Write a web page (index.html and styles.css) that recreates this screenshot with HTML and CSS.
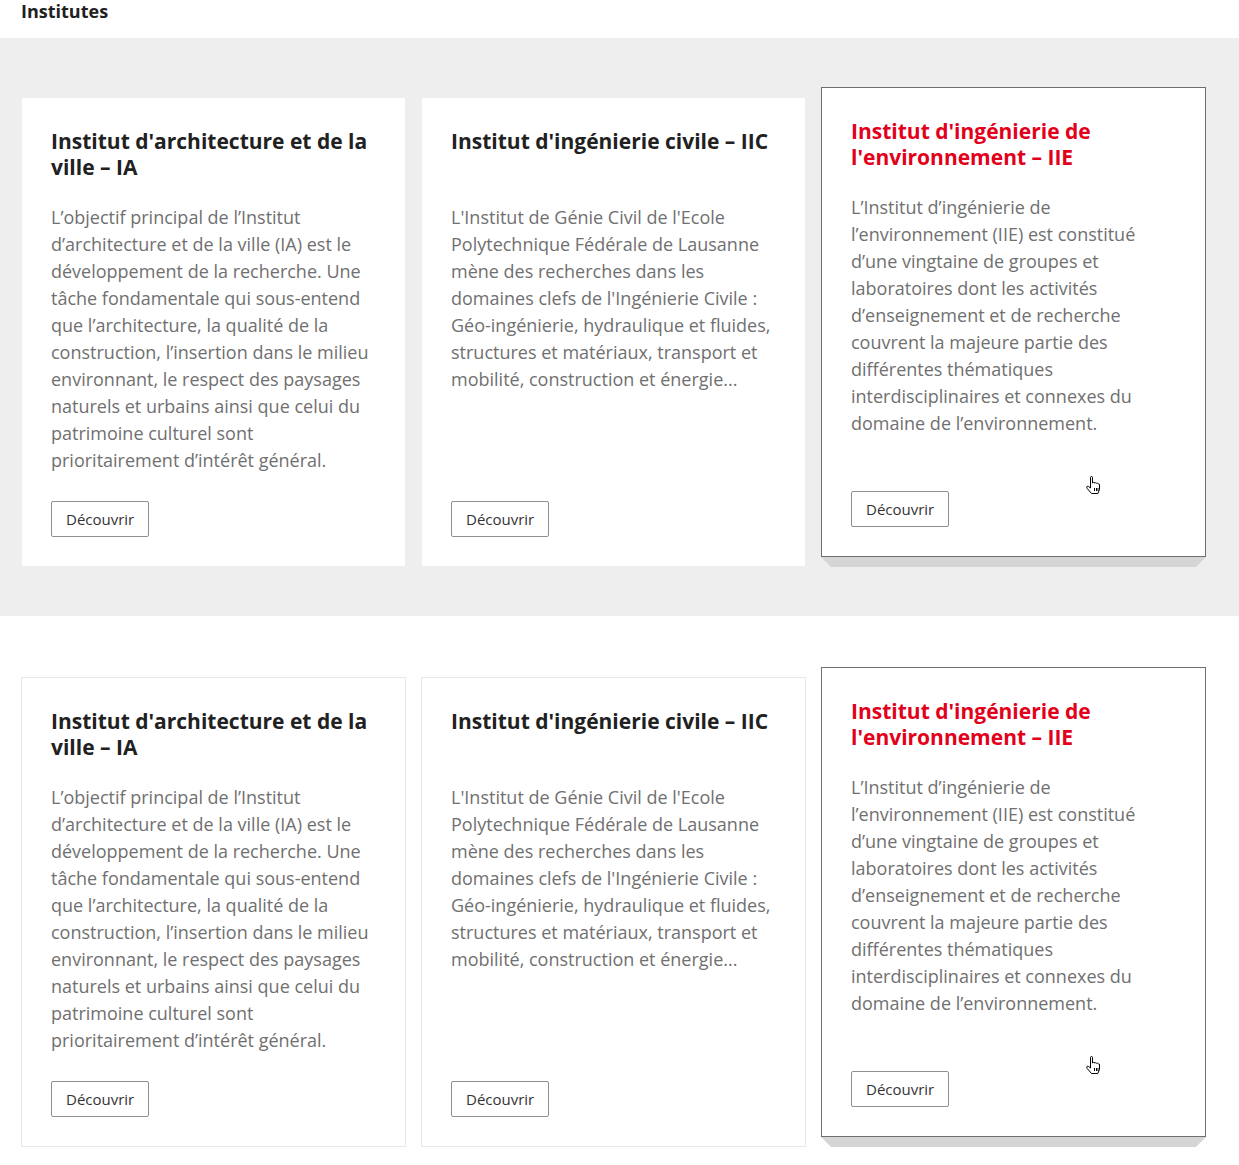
FILE: index.html
```html
<!DOCTYPE html>
<html lang="fr">
<head>
<meta charset="utf-8">
<title>Institutes</title>
<link rel="stylesheet" href="styles.css">
</head>
<body>
<h2 class="page-title">Institutes</h2>

<section class="band band-grey">
  <div class="cards">
    <article class="card">
      <h3 class="card-title">Institut d'architecture et de la ville – IA</h3>
      <p class="card-text">L’objectif principal de l’Institut d’architecture et de la ville (IA) est le développement de la recherche. Une tâche fondamentale qui sous-entend que l’architecture, la qualité de la construction, l’insertion dans le milieu environnant, le respect des paysages naturels et urbains ainsi que celui du patrimoine culturel sont prioritairement d’intérêt général.</p>
      <a class="btn" href="#">Découvrir</a>
    </article>
    <article class="card">
      <h3 class="card-title">Institut d'ingénierie civile – IIC</h3>
      <p class="card-text">L'Institut de Génie Civil de l'Ecole Polytechnique Fédérale de Lausanne mène des recherches dans les domaines clefs de l'Ingénierie Civile : Géo-ingénierie, hydraulique et fluides, structures et matériaux, transport et mobilité, construction et énergie...</p>
      <a class="btn" href="#">Découvrir</a>
    </article>
    <article class="card card-hover">
      <h3 class="card-title">Institut d'ingénierie de l'environnement – IIE</h3>
      <p class="card-text">L’Institut d’ingénierie de l’environnement (IIE) est constitué d’une vingtaine de groupes et laboratoires dont les activités d’enseignement et de recherche couvrent la majeure partie des différentes thématiques interdisciplinaires et connexes du domaine de l’environnement.</p>
      <a class="btn" href="#">Découvrir</a>
      <svg class="cursor" width="18" height="20" viewBox="0 0 18 20" aria-hidden="true"><path d="M5.5 1.5 Q5.5 0.5 6.5 0.5 Q7.5 0.5 7.5 1.5 L7.5 7 Q8.5 6 9.5 6.5 L9.5 7 Q10.5 6.3 11.5 7.3 Q12.5 6.8 13.5 7.8 Q14.5 7.6 14.5 9 L14.5 13.5 L12.8 17.5 L6.5 17.5 L2.2 12.5 Q1.2 10.8 2.3 10.2 Q3.4 9.9 5.5 12 Z" fill="#fff" stroke="#000" stroke-width="1"/><path d="M9.5 12 V15 M11.5 12 V15 M13 12 V15" stroke="#000" stroke-width="1"/></svg>
    </article>
  </div>
</section>

<section class="band band-white">
  <div class="cards">
    <article class="card">
      <h3 class="card-title">Institut d'architecture et de la ville – IA</h3>
      <p class="card-text">L’objectif principal de l’Institut d’architecture et de la ville (IA) est le développement de la recherche. Une tâche fondamentale qui sous-entend que l’architecture, la qualité de la construction, l’insertion dans le milieu environnant, le respect des paysages naturels et urbains ainsi que celui du patrimoine culturel sont prioritairement d’intérêt général.</p>
      <a class="btn" href="#">Découvrir</a>
    </article>
    <article class="card">
      <h3 class="card-title">Institut d'ingénierie civile – IIC</h3>
      <p class="card-text">L'Institut de Génie Civil de l'Ecole Polytechnique Fédérale de Lausanne mène des recherches dans les domaines clefs de l'Ingénierie Civile : Géo-ingénierie, hydraulique et fluides, structures et matériaux, transport et mobilité, construction et énergie...</p>
      <a class="btn" href="#">Découvrir</a>
    </article>
    <article class="card card-hover">
      <h3 class="card-title">Institut d'ingénierie de l'environnement – IIE</h3>
      <p class="card-text">L’Institut d’ingénierie de l’environnement (IIE) est constitué d’une vingtaine de groupes et laboratoires dont les activités d’enseignement et de recherche couvrent la majeure partie des différentes thématiques interdisciplinaires et connexes du domaine de l’environnement.</p>
      <a class="btn" href="#">Découvrir</a>
      <svg class="cursor" width="18" height="20" viewBox="0 0 18 20" aria-hidden="true"><path d="M5.5 1.5 Q5.5 0.5 6.5 0.5 Q7.5 0.5 7.5 1.5 L7.5 7 Q8.5 6 9.5 6.5 L9.5 7 Q10.5 6.3 11.5 7.3 Q12.5 6.8 13.5 7.8 Q14.5 7.6 14.5 9 L14.5 13.5 L12.8 17.5 L6.5 17.5 L2.2 12.5 Q1.2 10.8 2.3 10.2 Q3.4 9.9 5.5 12 Z" fill="#fff" stroke="#000" stroke-width="1"/><path d="M9.5 12 V15 M11.5 12 V15 M13 12 V15" stroke="#000" stroke-width="1"/></svg>
    </article>
  </div>
</section>
</body>
</html>
```

FILE: styles.css
```css
* { box-sizing: border-box; }

html, body {
  margin: 0;
  padding: 0;
  background: #fff;
  font-family: "Open Sans", "Noto Sans", "Liberation Sans", sans-serif;
}

.page-title {
  margin: 0;
  height: 38px;
  padding-left: 21px;
  font-size: 18px;
  line-height: 23px;
  font-weight: 700;
  color: #212121;
}

.band {
  padding: 59px 0 49px;
}
.band-grey { background: #eeeeee; }
.band-white { background: #fff; padding-top: 61px; }

.cards {
  display: grid;
  grid-template-columns: repeat(3, 385px);
  column-gap: 15px;
  padding-left: 21px;
}

.card {
  position: relative;
  display: flex;
  flex-direction: column;
  align-items: flex-start;
  background: #fff;
  border: 1px solid #eeeeee;
  padding: 30px 29px 29px 29px;
}
.band-white .card { border-color: #e8e8e8; }

.card-title {
  margin: 0;
  min-height: 52px;
  font-size: 21px;
  line-height: 26px;
  font-weight: 700;
  color: #212121;
}

.card-text {
  margin: 24px 0 27px;
  font-size: 18px;
  line-height: 27px;
  color: #707070;
}

.btn {
  margin-top: auto;
  display: inline-block;
  height: 36px;
  line-height: 34px;
  padding: 0 14px;
  border: 1px solid #8f8f8f;
  border-radius: 2px;
  font-size: 15px;
  color: #333;
  text-decoration: none;
}

.card.card-hover {
  transform: translateY(-10px);
  border-color: #6f6f6f;
}
.card-hover .card-title { color: #e2001a; }
.card-hover::after {
  content: "";
  position: absolute;
  left: -1px;
  right: -1px;
  top: 100%;
  margin-top: 1px;
  height: 10px;
  background: #d5d5d5;
  clip-path: polygon(0 0, 100% 0, calc(100% - 10px) 100%, 10px 100%);
}

.cursor {
  position: absolute;
  left: 263px;
  top: 388px;
}
```
